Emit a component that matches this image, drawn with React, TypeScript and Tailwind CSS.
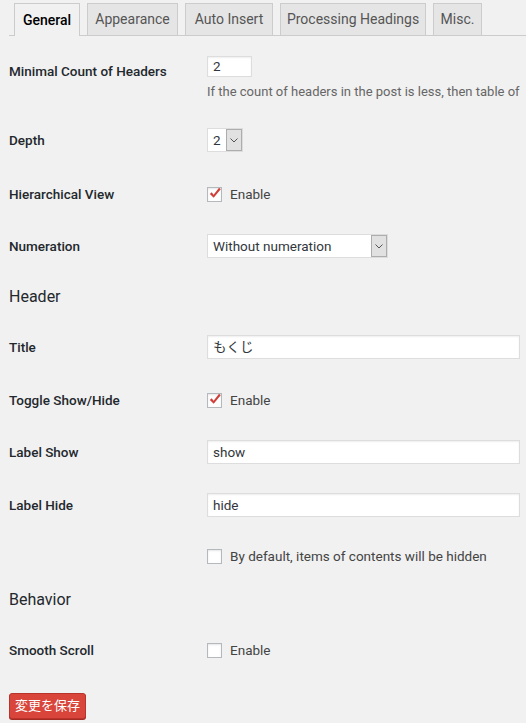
import type { ReactNode } from "react";

const TABS = [
  { label: "General", w: "w-[66px]", active: true },
  { label: "Appearance", w: "w-[91px]", active: false },
  { label: "Auto Insert", w: "w-[88px]", active: false },
  { label: "Processing Headings", w: "w-[146px]", active: false },
  { label: "Misc.", w: "w-[49px]", active: false },
];

function Tabs() {
  return (
    <div className="ml-[9px] flex h-[36px] items-end gap-[7px] border-b border-[#cccccc] pl-[5px]">
      {TABS.map((t) => (
        <div
          key={t.label}
          className={
            t.active
              ? `${t.w} -mb-px flex h-[33px] items-center justify-center border border-b-0 border-[#cccccc] bg-[#f1f1f1] text-[14px] font-medium text-black`
              : `${t.w} flex h-[32px] items-center justify-center border border-b-0 border-[#cccccc] bg-[#e5e5e5] text-[14px] text-[#555555]`
          }
        >
          {t.label}
        </div>
      ))}
    </div>
  );
}

function Row({ label, className, children }: { label: string; className: string; children?: ReactNode }) {
  return (
    <div className={`flex items-center ${className}`}>
      <div className="w-[198px] shrink-0 text-[13.5px] font-medium text-[#23282d]">{label}</div>
      <div className="flex min-w-0 flex-1 items-center">{children}</div>
    </div>
  );
}

function TextInput({ value, className }: { value: string; className: string }) {
  return (
    <div
      className={`flex items-center border border-[#dddddd] bg-white pl-[5px] text-[13.5px] text-[#32373c] shadow-[inset_0_1px_2px_rgba(0,0,0,0.07)] ${className}`}
    >
      {value}
    </div>
  );
}

function SelectBox({ value, className }: { value: string; className: string }) {
  return (
    <div className={`flex h-[24px] items-stretch border border-[#dddddd] bg-white ${className}`}>
      <div className="flex flex-1 items-center pl-[5px] text-[13.5px] text-[#32373c]">{value}</div>
      <div className="flex w-[16px] items-center justify-center border border-[#adadad] bg-[#e1e1e1]">
        <svg width="8" height="5" viewBox="0 0 8 5" fill="none">
          <path d="M0.5 0.5 L4 4 L7.5 0.5" stroke="#555555" strokeWidth="1" />
        </svg>
      </div>
    </div>
  );
}

function Checkbox({ checked, label }: { checked: boolean; label: string }) {
  return (
    <div className="flex items-center">
      <span className="relative h-[15px] w-[15px] border border-[#b4b9be] bg-white shadow-[inset_0_1px_2px_rgba(0,0,0,0.1)]">
        {checked && (
          <svg className="absolute left-[-1px] top-[-3px]" width="16" height="16" viewBox="0 0 17 17">
            <polygon points="3,9.5 5,7.8 7,10.3 12.8,3 14.6,4.6 7.1,13.6" fill="#d0403a" />
          </svg>
        )}
      </span>
      <span className="ml-[8px] text-[13.5px] text-[#444444]">{label}</span>
    </div>
  );
}

export default function App() {
  return (
    <div className="h-[723px] w-[526px] overflow-hidden bg-[#f1f1f1] font-['Roboto','Noto_Sans_CJK_JP',sans-serif]">
      <Tabs />
      <div className="pl-[9px]">
        {/* first row: input with description below */}
        <div className="flex h-[76px] items-start">
          <div className="w-[198px] shrink-0 pt-[25px] text-[13.5px] font-medium text-[#23282d]">
            Minimal Count of Headers
          </div>
          <div className="min-w-0 flex-1 pt-[20px]">
            <TextInput value="2" className="h-[21px] w-[45px]" />
            <div className="mt-[5px] whitespace-nowrap text-[13px] text-[#666666]">
              If the count of headers in the post is less, then table of
            </div>
          </div>
        </div>

        <Row label="Depth" className="h-[56px]">
          <SelectBox value="2" className="w-[36px]" />
        </Row>
        <Row label="Hierarchical View" className="h-[52px]">
          <Checkbox checked label="Enable" />
        </Row>
        <Row label="Numeration" className="h-[52px]">
          <SelectBox value="Without numeration" className="w-[181px]" />
        </Row>

        <div className="flex h-[50px] items-center text-[16px] text-[#23282d]">Header</div>

        <Row label="Title" className="h-[50px]">
          <TextInput value="もくじ" className="h-[24px] w-[313px]" />
        </Row>
        <Row label="Toggle Show/Hide" className="h-[56px]">
          <Checkbox checked label="Enable" />
        </Row>
        <Row label="Label Show" className="h-[48px]">
          <TextInput value="show" className="h-[24px] w-[313px]" />
        </Row>
        <Row label="Label Hide" className="h-[58px]">
          <TextInput value="hide" className="h-[24px] w-[313px]" />
        </Row>
        <Row label="" className="h-[44px]">
          <Checkbox checked={false} label="By default, items of contents will be hidden" />
        </Row>

        <div className="flex h-[44px] items-center text-[16px] text-[#23282d]">Behavior</div>

        <Row label="Smooth Scroll" className="h-[56px]">
          <Checkbox checked={false} label="Enable" />
        </Row>

        <button className="mt-[15px] flex h-[26px] w-[77px] items-center justify-center rounded-[3px] border border-[#b8332b] bg-[#d9453b] text-[13px] text-white shadow-[0_1px_0_#a52a22]">
          変更を保存
        </button>
      </div>
    </div>
  );
}
